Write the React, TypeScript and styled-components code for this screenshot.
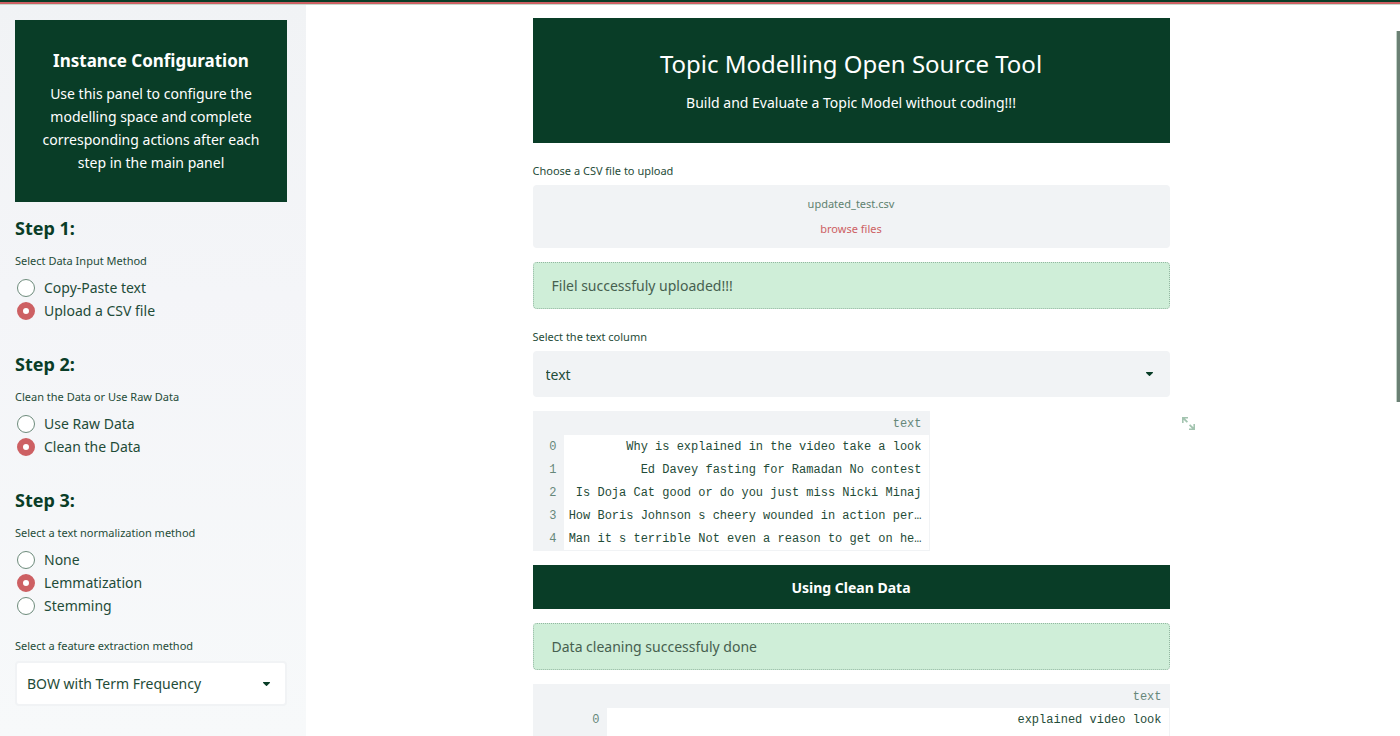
import React, { useId, useState } from "react";
import styled, { createGlobalStyle } from "styled-components";

const green = "#093d27";
const ink = "#1f4c38";
const red = "#cd6063";
const grey = "#f1f3f5";

const GlobalStyle = createGlobalStyle`
  * { box-sizing: border-box; }
  body {
    margin: 0;
    background: #fff;
    color: ${ink};
    font-family: "Noto Sans", "Open Sans", sans-serif;
    font-size: 14px;
    line-height: 23px;
  }
`;

const Shell = styled.div`
  display: flex;
  height: 100vh;
  overflow: hidden;
`;

const TopBar = styled.div`
  position: fixed;
  inset: 0 0 auto 0;
  height: 5px;
  background: linear-gradient(${green} 2px, ${red} 2px 4px, #c4d8cb 4px);
`;

const Sidebar = styled.aside`
  flex: 0 0 306px;
  padding: 20px 19px 20px 15px;
  background: linear-gradient(#f1f3f5, #f4f5f8 40%, #f7f9fa);
`;

const Main = styled.main`
  flex: 1;
  min-width: 0;
  padding: 18px 16px 0;
`;

const Column = styled.div`
  display: flex;
  flex-direction: column;
  gap: 14px;
  width: 100%;
  max-width: 637px;
  margin: 0 auto;
`;

const ScrollTrack = styled.div`
  flex: 0 0 4px;
  padding-top: 31px;
`;

const ScrollThumb = styled.div`
  height: 371px;
  border-left: 1px solid #c3d3c9;
  background: #6b8074;
`;

const Panel = styled.section`
  padding: 27px 20px 28px;
  background: ${green};
  color: #fff;
  text-align: center;
`;

const PanelTitle = styled.h2`
  margin: 0 0 7px;
  font-size: 17px;
  line-height: 28px;
  font-weight: 700;
`;

const PanelText = styled.p`
  margin: 0;
`;

const Hero = styled.header`
  padding: 26px 20px 29px;
  background: ${green};
  color: #fff;
  text-align: center;
`;

const HeroTitle = styled.h1`
  margin: 0 0 8px;
  font-size: 24px;
  line-height: 40px;
  font-weight: 400;
`;

const HeroText = styled.p`
  margin: 0;
  font-size: 14px;
  line-height: 22px;
`;

const Step = styled.section`
  margin-top: ${(p: { $first?: boolean }) => (p.$first ? "13px" : "29px")};
`;

const StepTitle = styled.h3`
  margin: 0 0 9px;
  color: ${green};
  font-size: 18px;
  line-height: 26px;
  font-weight: 700;
`;

const RadioSet = styled.fieldset`
  margin: 0;
  padding: 0;
  border: 0;
`;

const Legend = styled.legend`
  margin: 0 0 4px;
  padding: 0;
  font-size: 11px;
  line-height: 22px;
`;

const RadioLabel = styled.label`
  display: flex;
  align-items: center;
  gap: 9px;
  padding-left: 2px;
  cursor: pointer;
`;

const Radio = styled.input`
  appearance: none;
  width: 18px;
  height: 18px;
  margin: 0;
  border: 1px solid #6d8b7b;
  border-radius: 50%;
  background: #fff;
  &:checked {
    border: 6px solid ${red};
  }
`;

const SideField = styled.div`
  margin-top: 18px;
`;

const SideLabel = styled.label`
  display: block;
  margin-bottom: 4px;
  font-size: 11px;
  line-height: 22px;
`;

const FieldLabel = styled.label`
  display: block;
  font-size: 11px;
  line-height: 28px;
`;

const SelectBox = styled.div`
  position: relative;
`;

const Select = styled.select`
  appearance: none;
  display: block;
  width: 100%;
  height: ${(p: { $outlined?: boolean }) => (p.$outlined ? "45px" : "46px")};
  padding: 0 40px 0 ${(p) => (p.$outlined ? "10px" : "11px")};
  border: 2px solid ${grey};
  border-radius: 4px;
  background: ${(p) => (p.$outlined ? "#fff" : grey)};
  color: ${ink};
  font: inherit;
`;

const Caret = styled.svg`
  position: absolute;
  top: 50%;
  right: 16px;
  width: 9px;
  height: 5px;
  margin-top: -2px;
  pointer-events: none;
`;

const Upload = styled.div`
  display: flex;
  flex-direction: column;
  align-items: center;
  padding: 6px 0 7px;
  border-radius: 4px;
  background: ${grey};
  font-size: 11px;
  line-height: 25px;
`;

const FileName = styled.span`
  color: #5f8270;
`;

const Browse = styled.button`
  padding: 0;
  border: 0;
  background: none;
  color: ${red};
  font: inherit;
  cursor: pointer;
`;

const Alert = styled.div`
  padding: 11px 18px;
  border: 1px dotted #93b7a1;
  border-radius: 4px;
  background: #cfeed8;
  color: #46604f;
`;

const Banner = styled.h4`
  margin: 0;
  padding: 12px 11px 10px;
  background: ${green};
  color: #fff;
  text-align: center;
  font-size: 14px;
  line-height: 22px;
  font-weight: 700;
`;

const TableArea = styled.div`
  position: relative;
`;

const Expand = styled.button`
  position: absolute;
  top: 4px;
  left: calc(100% + 10px);
  display: grid;
  padding: 0;
  border: 0;
  background: none;
  color: #a3c4b0;
  cursor: pointer;
`;

const Table = styled.table`
  width: ${(p: { $full?: boolean }) => (p.$full ? "100%" : "397px")};
  table-layout: fixed;
  border-spacing: 0;
  border: 1px solid ${grey};
  font-family: "Liberation Mono", monospace;
  font-size: 12px;
  line-height: 21px;
  text-align: right;
`;

const HeadCell = styled.th`
  height: 23px;
  padding: 2px 7px 0;
  background: ${grey};
  color: #66877a;
  font-weight: 400;
  text-align: right;
`;

const IndexHead = styled(HeadCell)`
  width: ${(p: { $wide?: boolean }) => (p.$wide ? "73px" : "30px")};
`;

const Cell = styled.td`
  height: 23px;
  padding: 2px 7px 0 2px;
  overflow: hidden;
  white-space: nowrap;
  text-overflow: ellipsis;
`;

function RadioGroup({ legend, options, initial }: { legend: string; options: string[]; initial: string }) {
  const name = useId();
  const [value, setValue] = useState(initial);
  return (
    <RadioSet>
      <Legend>{legend}</Legend>
      {options.map((option) => (
        <RadioLabel key={option}>
          <Radio type="radio" name={name} checked={value === option} onChange={() => setValue(option)} />
          {option}
        </RadioLabel>
      ))}
    </RadioSet>
  );
}

function Dropdown({ id, value, outlined }: { id: string; value: string; outlined?: boolean }) {
  return (
    <SelectBox>
      <Select id={id} $outlined={outlined} defaultValue={value}>
        <option>{value}</option>
      </Select>
      <Caret viewBox="0 0 9 5" aria-hidden="true">
        <path d="M1.500 0h6q1 .2 .3 1L5 3.800q-.5 .4-1 0L1.200 1Q.5 .2 1.500 0Z" fill={green} />
      </Caret>
    </SelectBox>
  );
}

function DataTable({ rows, full }: { rows: string[]; full?: boolean }) {
  return (
    <Table $full={full}>
      <thead>
        <tr>
          <IndexHead as="td" $wide={full} />
          <HeadCell scope="col">text</HeadCell>
        </tr>
      </thead>
      <tbody>
        {rows.map((row, i) => (
          <tr key={i}>
            <HeadCell scope="row">{row && i}</HeadCell>
            <Cell>{row}</Cell>
          </tr>
        ))}
      </tbody>
    </Table>
  );
}

const rawRows = [
  "Why is explained in the video take a look",
  "Ed Davey fasting for Ramadan No contest",
  "Is Doja Cat good or do you just miss Nicki Minaj",
  "How Boris Johnson s cheery wounded in action per…",
  "Man it s terrible Not even a reason to get on he…",
];

const cleanRows = ["explained video look", ""];

export default function App() {
  return (
    <>
      <GlobalStyle />
      <Shell>
        <Sidebar>
          <Panel>
            <PanelTitle>Instance Configuration</PanelTitle>
            <PanelText>
              Use this panel to configure the modelling space and complete corresponding actions after each step in the
              main panel
            </PanelText>
          </Panel>
          <Step $first>
            <StepTitle>Step 1:</StepTitle>
            <RadioGroup
              legend="Select Data Input Method"
              options={["Copy-Paste text", "Upload a CSV file"]}
              initial="Upload a CSV file"
            />
          </Step>
          <Step>
            <StepTitle>Step 2:</StepTitle>
            <RadioGroup
              legend="Clean the Data or Use Raw Data"
              options={["Use Raw Data", "Clean the Data"]}
              initial="Clean the Data"
            />
          </Step>
          <Step>
            <StepTitle>Step 3:</StepTitle>
            <RadioGroup
              legend="Select a text normalization method"
              options={["None", "Lemmatization", "Stemming"]}
              initial="Lemmatization"
            />
            <SideField>
              <SideLabel htmlFor="feature">Select a feature extraction method</SideLabel>
              <Dropdown id="feature" value="BOW with Term Frequency" outlined />
            </SideField>
          </Step>
        </Sidebar>
        <Main>
          <Column>
            <Hero>
              <HeroTitle>Topic Modelling Open Source Tool</HeroTitle>
              <HeroText>Build and Evaluate a Topic Model without coding!!!</HeroText>
            </Hero>
            <div>
              <FieldLabel htmlFor="browse">Choose a CSV file to upload</FieldLabel>
              <Upload>
                <FileName>updated_test.csv</FileName>
                <Browse id="browse" type="button">browse files</Browse>
              </Upload>
            </div>
            <Alert role="status">Filel successfuly uploaded!!!</Alert>
            <div>
              <FieldLabel htmlFor="column">Select the text column</FieldLabel>
              <Dropdown id="column" value="text" />
            </div>
            <TableArea>
              <DataTable rows={rawRows} />
              <Expand type="button" aria-label="View fullscreen">
                <svg width="16" height="16" viewBox="0 0 16 16" fill="currentColor">
                  <path d="M2 2h6v1.600H5L8 6.600 6.800 7.800 3.600 4.800V8H2ZM15 15H9v-1.600h3L9 10.400l1.200-1.200 3.200 3V9H15Z" />
                </svg>
              </Expand>
            </TableArea>
            <Banner>Using Clean Data</Banner>
            <Alert role="status">Data cleaning successfuly done</Alert>
            <DataTable rows={cleanRows} full />
          </Column>
        </Main>
        <ScrollTrack>
          <ScrollThumb />
        </ScrollTrack>
      </Shell>
      <TopBar />
    </>
  );
}
